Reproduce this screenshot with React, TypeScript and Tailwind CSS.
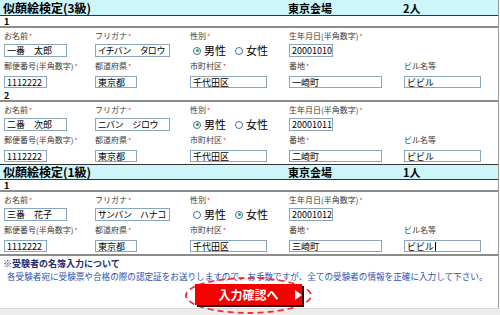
import React from "react";

type Person = {
  no: string;
  name: string;
  kana: string;
  male: boolean;
  birth: string;
  zip: string;
  pref: string;
  city: string;
  banchi: string;
  bldg: string;
  caret?: boolean;
};

const font = { fontFamily: '"Noto Sans CJK JP", "Noto Sans", sans-serif' };
const cols = "grid grid-cols-[91px_95px_99px_115px_1fr]";

function Req() {
  return <span className="ml-[1px] text-[7px] text-[#ff2a2a]">*</span>;
}

function Label({ children, req }: { children: React.ReactNode; req?: boolean }) {
  return (
    <div className="whitespace-nowrap text-[8px] leading-[12px] text-[#3a3a3a]">
      {children}
      {req && <Req />}
    </div>
  );
}

function Box({ className, children }: { className: string; children: React.ReactNode }) {
  return (
    <div
      className={`flex items-center overflow-hidden whitespace-nowrap border border-[#8aa5c0] bg-white px-[2px] text-[9px] leading-none text-black ${className}`}
    >
      {children}
    </div>
  );
}

function Radio({ on, label }: { on: boolean; label: string }) {
  return (
    <div className="flex items-center gap-[3px]">
      <span className="flex size-[8px] items-center justify-center rounded-full border border-[#3d6fa8] bg-white">
        {on && <span className="size-[3px] rounded-full bg-[#22a830]" />}
      </span>
      <span className="text-[11px] leading-none text-black">{label}</span>
    </div>
  );
}

function Header({ title, count, top }: { title: string; count: string; top?: boolean }) {
  return (
    <div
      className={`${cols} h-[16px] items-center border-b border-[#333] bg-[#cdf6fb] pl-[3px] text-[11px] font-bold leading-[14px] text-black ${
        top ? "border-t" : ""
      }`}
    >
      <div className="col-span-3 text-[12px]">{title}</div>
      <div>東京会場</div>
      <div>{count}</div>
    </div>
  );
}

function Entry({ p }: { p: Person }) {
  return (
    <div>
      <div className="flex h-[12px] items-center border-b-2 border-[#8c8c8c] pl-[4px] text-[9px] font-bold leading-[9px] text-black">
        {p.no}
      </div>
      <div className={`${cols} px-[4px] pt-[2px] pb-[2px]`}>
        <Label req>お名前</Label>
        <Label req>フリガナ</Label>
        <Label req>性別</Label>
        <Label req>生年月日(半角数字)</Label>
        <div />

        <Box className="mt-[2px] h-[13px] w-[63px]">{p.name}</Box>
        <Box className="mt-[2px] h-[13px] w-[75px] [font-feature-settings:'palt']">{p.kana}</Box>
        <div className="mt-[2px] flex h-[13px] items-center gap-[9px] pl-[3px]">
          <Radio on={p.male} label="男性" />
          <Radio on={!p.male} label="女性" />
        </div>
        <Box className="mt-[2px] h-[13px] w-[44px]">{p.birth}</Box>
        <div />

        <div className="mt-[3px]">
          <Label req>郵便番号(半角数字)</Label>
        </div>
        <div className="mt-[3px]">
          <Label req>都道府県</Label>
        </div>
        <div className="mt-[3px]">
          <Label req>市町村区</Label>
        </div>
        <div className="mt-[3px]">
          <Label req>番地</Label>
        </div>
        <div className="mt-[3px]">
          <Label>ビル名等</Label>
        </div>

        <Box className="mt-[4px] h-[12px] w-[43px]">{p.zip}</Box>
        <Box className="mt-[4px] h-[12px] w-[42px]">{p.pref}</Box>
        <Box className="mt-[4px] h-[12px] w-[77px]">{p.city}</Box>
        <Box className="mt-[4px] h-[12px] w-[93px]">{p.banchi}</Box>
        <Box className="mt-[4px] h-[12px] w-[77px]">
          {p.bldg}
          {p.caret && <span className="ml-[1px] h-[9px] w-px bg-black" />}
        </Box>
      </div>
    </div>
  );
}

const grade3: Person[] = [
  { no: "1", name: "一番　太郎", kana: "イチバン　タロウ", male: true, birth: "20001010", zip: "1112222", pref: "東京都", city: "千代田区", banchi: "一崎町", bldg: "ビビル" },
  { no: "2", name: "二番　次郎", kana: "ニバン　ジロウ", male: true, birth: "20001011", zip: "1112222", pref: "東京都", city: "千代田区", banchi: "二崎町", bldg: "ビビル" },
];

const grade1: Person[] = [
  { no: "1", name: "三番　花子", kana: "サンバン　ハナコ", male: false, birth: "20001012", zip: "1112222", pref: "東京都", city: "千代田区", banchi: "三崎町", bldg: "ビビル", caret: true },
];

export default function App() {
  return (
    <div className="h-[315px] w-[500px] overflow-hidden bg-white" style={font}>
      <div className="w-[499px] border-r border-[#9a9a9a]">
        <Header title="似顔絵検定(3級)" count="2人" />
        {grade3.map((p) => (
          <Entry key={p.no} p={p} />
        ))}
        <Header title="似顔絵検定(1級)" count="1人" top />
        {grade1.map((p) => (
          <Entry key={p.no} p={p} />
        ))}

        <div className="border-t-2 border-[#8c8c8c] pl-[3px] pt-[2px]">
          <div className="text-[9px] font-bold leading-[12px] text-[#1c2a6e]">※受験者の名簿入力について</div>
          <div className="pl-[4px] text-[8.6px] leading-[12px] text-[#2b4fb0] whitespace-nowrap">
            各受験者宛に受験票や合格の際の認定証をお送りしますので、お手数ですが、全ての受験者の情報を正確に入力して下さい。
          </div>
        </div>

        <div className="flex h-[26px] justify-center pt-[2px] pr-[2px]">
          <div className="relative">
            <div className="pointer-events-none absolute -left-[10px] -right-[10px] -top-[7px] h-[37px] rounded-[50%] border-2 border-dashed border-[#f03030]" />
            <button className="relative flex h-[21px] w-[107px] items-center bg-[#f40000] pl-[24px] text-[12px] font-bold text-white shadow-[2px_2px_0_#3a0000]">
              入力確認へ
              <svg className="ml-[16px]" width="7" height="10" viewBox="0 0 7 10">
                <path d="M0 0L7 5L0 10Z" fill="#fff" />
              </svg>
            </button>
          </div>
        </div>
      </div>
      <div className="h-[10px] border-t border-[#d8d8d8] bg-[#ececec]" />
    </div>
  );
}
